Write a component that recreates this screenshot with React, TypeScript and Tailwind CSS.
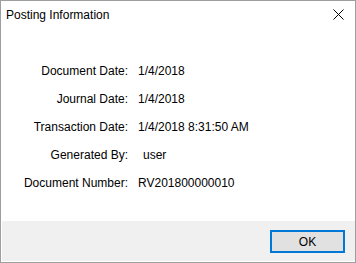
const ROWS: { label: string; value: string; indent?: boolean }[] = [
  { label: "Document Date:", value: "1/4/2018" },
  { label: "Journal Date:", value: "1/4/2018" },
  { label: "Transaction Date:", value: "1/4/2018 8:31:50 AM" },
  { label: "Generated By:", value: "user", indent: true },
  { label: "Document Number:", value: "RV201800000010" },
];

function CloseIcon() {
  return (
    <svg width="11" height="11" viewBox="0 0 11 11" className="block">
      <path d="M0.5 0.5 L10.5 10.5 M10.5 0.5 L0.5 10.5" stroke="#000" strokeWidth="1" fill="none" />
    </svg>
  );
}

export default function App() {
  return (
    <div className="flex h-[263px] w-[356px] flex-col border border-[#9e9e9e] bg-white font-['Liberation_Sans',Arial,sans-serif] text-black">
      <div className="flex h-[29px] items-start justify-between pl-[5px] pr-[11px]">
        <span className="pt-[8px] text-[12px] leading-none">Posting Information</span>
        <div className="pt-[8px]">
          <CloseIcon />
        </div>
      </div>

      <div className="flex-1 pt-[27px]">
        <div className="grid grid-cols-[127px_1fr] gap-x-[10px] text-[12px]">
          {ROWS.map((r) => (
            <div key={r.label} className="contents">
              <div className="flex h-[28px] items-center justify-end">{r.label}</div>
              <div className={`flex h-[28px] items-center ${r.indent ? "pl-[5px]" : ""}`}>{r.value}</div>
            </div>
          ))}
        </div>
      </div>

      <div className="flex h-[41px] items-start justify-end border-b border-l border-white bg-[#f0f0f0] pr-[10px] pt-[9px]">
        <button className="flex h-[23px] w-[75px] items-center justify-center border-2 border-[#0078d7] bg-[#e1e1e1] text-[12px] leading-none">
          OK
        </button>
      </div>
    </div>
  );
}
